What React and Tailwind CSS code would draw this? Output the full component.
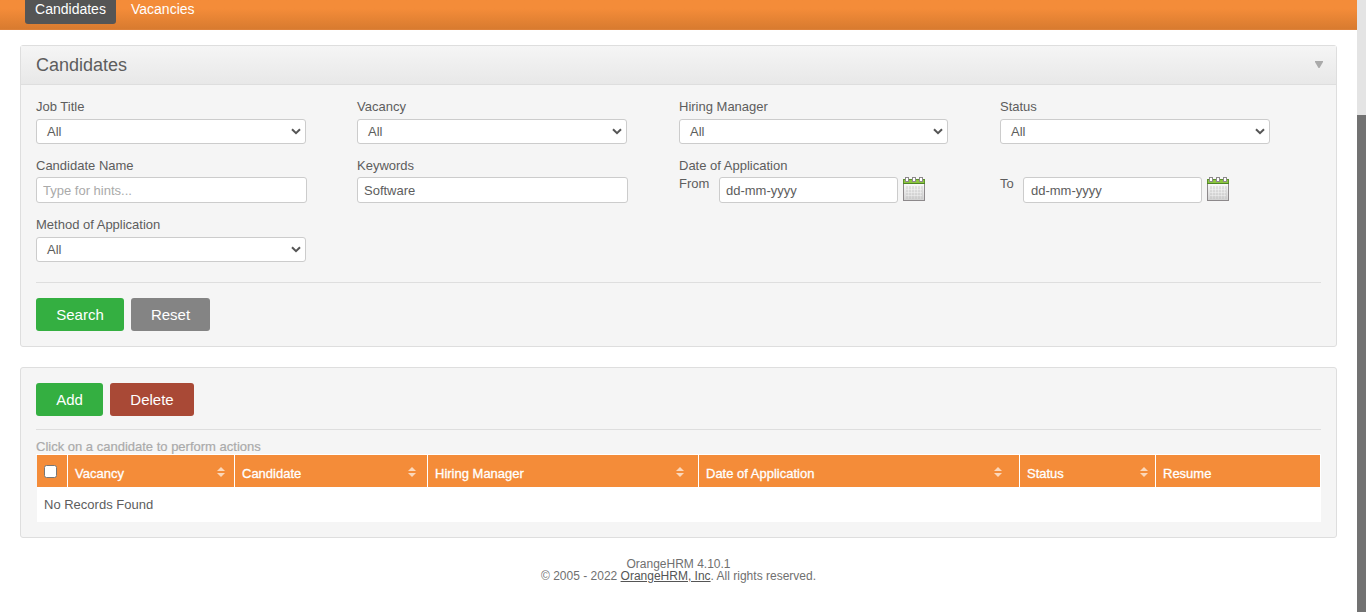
import React from 'react';

const Label = ({ children }) => (
  <div className="h-[18px] leading-[18px] whitespace-nowrap">{children}</div>
);

function Select({ width = 'w-[270px]' }) {
  return (
    <div className={`mt-[3px] flex h-[25px] items-center justify-between rounded-[3px] border border-[#ccc] bg-white pl-2.5 pr-1 ${width}`}>
      <span>All</span>
      <svg width="10" height="7" viewBox="0 0 10 7" fill="none" stroke="#555" strokeWidth="2">
        <path d="M1 1.2 5 5.2 9 1.2" />
      </svg>
    </div>
  );
}

function Input({ className, ...props }) {
  return (
    <input
      className={`h-[26px] rounded-[3px] border border-[#ccc] bg-white px-1.5 outline-none placeholder:text-[#aaa] ${className}`}
      {...props}
    />
  );
}

function Calendar() {
  return (
    <svg className="ml-[5px]" width="22" height="24" viewBox="0 0 22 24" shapeRendering="crispEdges">
      <defs>
        <linearGradient id="sheet" x1="0" y1="0" x2="0" y2="1">
          <stop offset="0" stopColor="#fafafa" />
          <stop offset="1" stopColor="#d2d2d2" />
        </linearGradient>
      </defs>
      <rect x="0.5" y="6.5" width="21" height="17" fill="url(#sheet)" stroke="#8d898b" />
      <path d="M4 9v13M7 9v13M10 9v13M13 9v13M16 9v13M19 9v13" stroke="#b8b8b8" strokeWidth="2" opacity=".3" />
      <path d="M3 12.5h16M3 15.5h16M3 18.5h16" stroke="#f4f4f4" opacity=".5" />
      <rect x="0" y="2" width="22" height="5" fill="#8cc63f" />
      <path d="M0 2.5h22M.5 2v5M21.5 2v5" stroke="#5d912d" />
      <path d="M0 6.5h22" stroke="#4e8524" />
      <g fill="#fff" stroke="#8d898b">
        <rect x="2.5" y="0.5" width="3" height="4" />
        <rect x="9.5" y="0.5" width="3" height="4" />
        <rect x="16.5" y="0.5" width="3" height="4" />
      </g>
    </svg>
  );
}

function DateField({ word, gap, pad }) {
  return (
    <div className="flex">
      <span className={`leading-[14px] ${gap}`}>{word}</span>
      <Input className={`w-[179px] ${pad || ''}`} defaultValue="dd-mm-yyyy" />
      <Calendar />
    </div>
  );
}

function Button({ children, className }) {
  return (
    <button className={`h-[33px] rounded-[3px] pt-px text-center text-[15px] leading-8 text-white ${className}`}>
      {children}
    </button>
  );
}

const columns = [
  ['Vacancy', 'w-[167px]', 'pr-[9px]'],
  ['Candidate', 'w-[193px]', 'pr-[11px]'],
  ['Hiring Manager', 'w-[271px]', 'pr-[14px]'],
  ['Date of Application', 'w-[321px]', 'pr-[17px]'],
  ['Status', 'w-[136px]', 'pr-[7px]'],
  ['Resume', 'w-[165px]', null],
];

export default function App() {
  return (
    <div className="flex h-[612px] w-[1366px] overflow-hidden bg-white font-['Liberation_Sans',Arial,sans-serif] text-[13px] text-[#5d5d5d]">
      <div className="w-[1357px]">
        <nav className="flex h-[30px] border-b border-[#dd8139] bg-linear-to-b from-[#f48c39] from-30% to-[#d87b2f] pl-[25px] text-[14px] leading-[18px] text-white">
          <div className="h-6 w-[91px] rounded-b-[3px] bg-[#555] text-center">Candidates</div>
          <div className="ml-[15px]">Vacancies</div>
        </nav>

        <section className="ml-5 mt-[15px] h-[302px] w-[1317px] rounded-[3px] border border-[#dedede] bg-[#f5f5f5]">
          <header className="flex h-[39px] items-center justify-between border-b border-[#dedede] bg-linear-to-b from-[#f5f5f5] to-[#e8e8e8] pl-[15px] pr-[13px]">
            <h1 className="text-[18px] text-[#5d5d5d]">Candidates</h1>
            <svg className="-mt-px" width="8" height="7" viewBox="0 0 8 7" fill="#aaa">
              <path d="M0 0h8v1L4.5 7h-1L0 1z" />
            </svg>
          </header>
          <div className="px-[15px] pt-[13px]">
            <div className="grid grid-cols-[321px_322px_321px_321px]">
              {['Job Title', 'Vacancy', 'Hiring Manager', 'Status'].map((t) => (
                <div key={t} className="h-[59px]">
                  <Label>{t}</Label>
                  <Select width={t === 'Hiring Manager' ? 'w-[269px]' : 'w-[270px]'} />
                </div>
              ))}
              <div className="h-[59px]">
                <Label>Candidate Name</Label>
                <Input className="mt-0.5 w-[271px]" placeholder="Type for hints..." />
              </div>
              <div className="h-[59px]">
                <Label>Keywords</Label>
                <Input className="mt-0.5 w-[271px]" defaultValue="Software" />
              </div>
              <div className="h-[59px]">
                <Label>Date of Application</Label>
                <div className="pt-0.5">
                  <DateField word="From" gap="w-10" />
                </div>
              </div>
              <div className="h-[59px] pt-5">
                <DateField word="To" gap="w-[23px]" pad="pl-[7px]" />
              </div>
              <div className="h-[66px]">
                <Label>Method of Application</Label>
                <Select />
              </div>
            </div>
            <div className="flex gap-[7px] border-t border-[#dedede] pt-[15px]">
              <Button className="w-[88px] bg-[#34af41]">Search</Button>
              <Button className="w-[79px] bg-[#848484]">Reset</Button>
            </div>
          </div>
        </section>

        <section className="ml-5 mt-5 h-[171px] w-[1317px] rounded-[3px] border border-[#dedede] bg-[#f5f5f5] px-[15px] pt-[15px]">
          <div className="flex h-[47px] gap-[7px] border-b border-[#dedede]">
            <Button className="w-[67px] bg-[#34af41]">Add</Button>
            <Button className="w-[84px] bg-[#a94936]">Delete</Button>
          </div>
          <p className="h-6 pt-[9px] leading-4 text-[#aaa] [-webkit-text-stroke:0.2px_#aaa]">
            Click on a candidate to perform actions
          </p>
          <div className="flex h-[33px] w-[1285px] border-r border-t border-white pl-px text-white">
            <div className="w-[30px] bg-[#f48c39] pl-[7px] pt-2.5">
              <div className="h-[13px] w-[13px] rounded-[2.5px] border border-[#767676] bg-white" />
            </div>
            {columns.map(([name, width, pad]) => (
              <div
                key={name}
                className={`flex justify-between border-l border-white bg-[#f48c39] pl-[7px] ${width} ${pad || ''}`}
              >
                <span className="pt-2.5 leading-[18px] [-webkit-text-stroke:0.3px_white]">{name}</span>
                {pad && (
                  <svg className="mt-3" width="8" height="10" viewBox="0 0 8 10" fill="#fbd8bb">
                    <path d="M4 0 8 4H0zM0 6h8L4 10z" />
                  </svg>
                )}
              </div>
            ))}
          </div>
          <div className="ml-px h-[35px] w-[1284px] bg-white pl-[7px] leading-[35px]">No Records Found</div>
        </section>

        <footer className="pt-5 text-center text-[12px] leading-3 text-[#707070]">
          OrangeHRM 4.10.1
          <br />© 2005 - 2022 <a className="text-[#555] underline">OrangeHRM, Inc</a>. All rights reserved.
        </footer>
      </div>
      <div className="w-[9px] bg-[#727272]">
        <div className="h-[115px] bg-[#e4e4e4]" />
      </div>
    </div>
  );
}
